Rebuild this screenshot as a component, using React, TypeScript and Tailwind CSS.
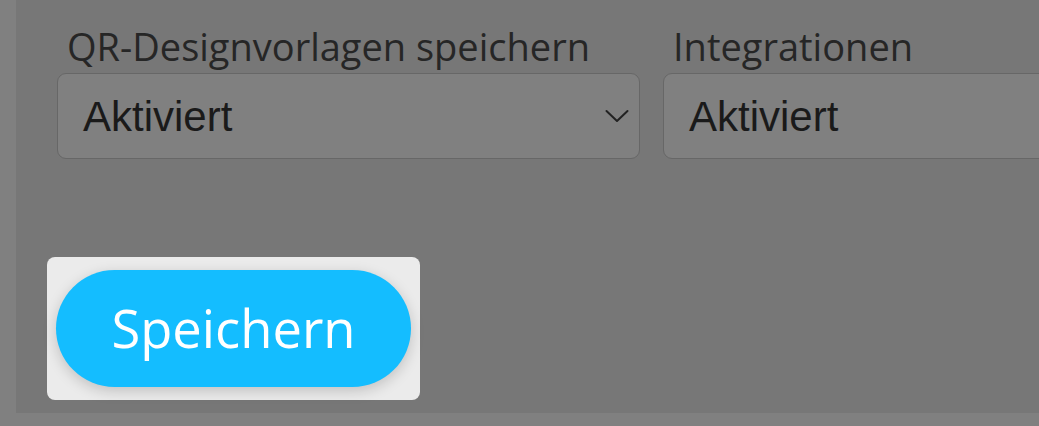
const fields = [
  { label: "QR-Designvorlagen speichern", value: "Aktiviert", chevron: true },
  { label: "Integrationen", value: "Aktiviert", chevron: false },
];

const Chevron = () => (
  <svg
    width="24"
    height="14"
    viewBox="0 0 24 14"
    fill="none"
    className="shrink-0"
  >
    <path
      d="M1.5 2 L12 12 L22.5 2"
      stroke="#222"
      strokeWidth="2"
      strokeLinecap="round"
      strokeLinejoin="round"
    />
  </svg>
);

const App = () => {
  return (
    <div className="h-[426px] w-full overflow-hidden bg-[#808080] pb-[13px] pl-[16px]">
      <div className="flex h-full flex-col overflow-hidden bg-[#777777] pl-[41px] pt-[24px]">
        <div className="flex gap-[23px]">
          {fields.map((f) => (
            <div key={f.label} className="w-[583px] shrink-0">
              <label className="block pl-[10px] font-['Open_Sans',sans-serif] text-[38px] leading-[44px] text-[#262626]">
                {f.label}
              </label>
              <div className="mt-[5px] flex h-[86px] items-center justify-between rounded-[9px] border-[1.5px] border-[#676767] bg-[#808080] pl-[25px] pr-[10px]">
                <span className="font-['Liberation_Sans',Arial,sans-serif] text-[42px] text-[#1a1a1a]">
                  {f.value}
                </span>
                {f.chevron && <Chevron />}
              </div>
            </div>
          ))}
        </div>

        <div className="-ml-[10px] mt-[98px] w-fit rounded-[8px] bg-[#ebebeb] px-[9px] py-[13px]">
          <button className="flex h-[117px] w-[355px] items-center justify-center rounded-full bg-[#14bdff] font-['Open_Sans',sans-serif] text-[52.5px] text-white shadow-[0_4px_14px_rgba(0,0,0,0.18)]">
            Speichern
          </button>
        </div>
      </div>
    </div>
  );
};

export default App;
